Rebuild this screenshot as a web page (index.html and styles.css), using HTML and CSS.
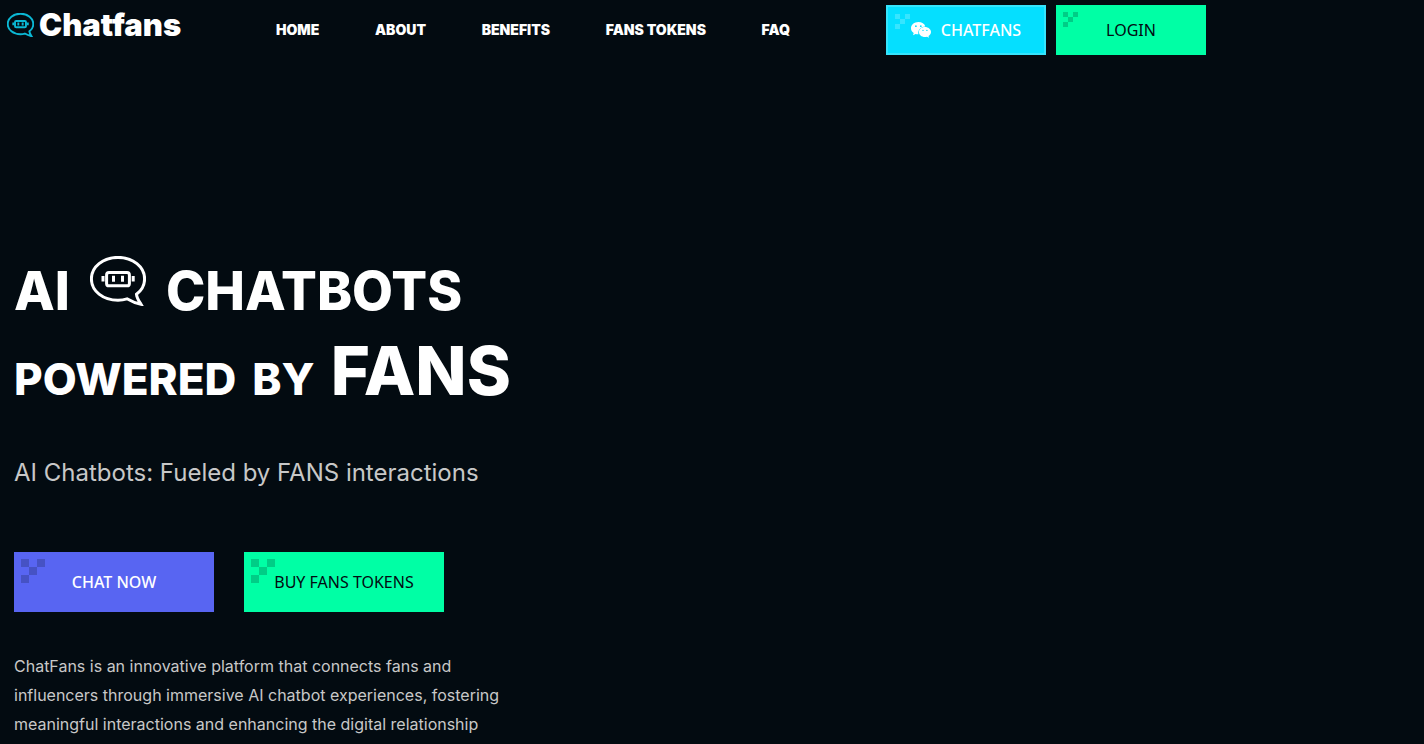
FILE: index.html
```html
<!DOCTYPE html>
<html lang="en">
<head>
  <meta charset="UTF-8">
  <meta name="viewport" content="width=device-width, initial-scale=1.0">
  <title>Chatfans</title>
  <link rel="stylesheet" href="styles.css">
</head>
<body>
  <svg class="sprite" aria-hidden="true">
    <symbol id="bot" viewBox="0 0 56 50">
      <g fill="none" stroke="currentColor">
        <path d="M37 42.800C34 43.800 31 44.200 28 44.200C13 44.200 1.400 35 1.400 22.900S13 1.400 28 1.400S54.600 11 54.600 22.900C54.600 29 51.500 34.500 46.500 38.300C46.800 42 49 45 51 48.300C46.500 47.400 41.500 45.500 37 42.800Z"/>
        <rect x="16.600" y="16.600" width="22.800" height="13.200" rx="2.400"/>
        <path d="M23.500 19.800v6M32.500 19.800v6M13 20v5.600M43.200 20v5.600"/>
      </g>
    </symbol>
    <symbol id="pixels" viewBox="0 0 3 3">
      <path fill="currentColor" d="M0 0h1v1h-1zM2 0h1v1h-1zM1 1h1v1h-1zM0 2h1v1h-1z"/>
    </symbol>
  </svg>

  <header class="header">
    <a class="logo" href="#">
      <svg class="logo-icon" aria-hidden="true"><use href="#bot"/></svg>
      <span>Chatfans</span>
    </a>
    <nav class="nav">
      <a href="#home">HOME</a>
      <a href="#about">ABOUT</a>
      <a href="#benefits">BENEFITS</a>
      <a href="#tokens">FANS TOKENS</a>
      <a href="#faq">FAQ</a>
    </nav>
    <div class="header-btns">
      <button class="btn btn-cyan">
        <svg class="pixels" aria-hidden="true"><use href="#pixels"/></svg>
        <svg class="wechat" viewBox="0 0 20 16" aria-hidden="true">
          <path fill="#fff" d="M7.4 0C3.3 0 0 2.8 0 6.2c0 1.9 1 3.6 2.7 4.8L2 13.2l2.6-1.3c.9.3 1.8.4 2.8.4C6.5 8 9.7 4.6 14.3 4.4C13.6 1.8 10.8 0 7.4 0z"/>
          <path fill="#fff" d="M20 10c0-2.8-2.8-5-6.1-5S7.9 7.200 7.900 10s2.600 5 6 5c.7 0 1.400-.1 2.100-.3l2 1.100-.5-1.800C19 13 20 11.600 20 10z"/>
          <g fill="#05dfff">
            <circle cx="4.900" cy="4.200" r=".9"/><circle cx="9.800" cy="4.200" r=".9"/>
            <circle cx="12" cy="8.400" r=".7"/><circle cx="15.900" cy="8.400" r=".7"/>
          </g>
        </svg>
        CHATFANS
      </button>
      <button class="btn btn-green">
        <svg class="pixels" aria-hidden="true"><use href="#pixels"/></svg>
        LOGIN
      </button>
    </div>
  </header>

  <main class="hero" id="home">
    <h1>
      <span class="line">
        <span>AI</span>
        <svg class="title-icon" aria-hidden="true"><use href="#bot"/></svg>
        <span>CHATBOTS</span>
      </span>
      <span class="line small">
        <span>POWERED</span>
        <span>BY</span>
        <span class="big">FANS</span>
      </span>
    </h1>
    <p class="tagline">AI Chatbots: Fueled by FANS interactions</p>
    <div class="hero-btns">
      <button class="btn btn-blue">
        <svg class="pixels" aria-hidden="true"><use href="#pixels"/></svg>
        CHAT NOW
      </button>
      <button class="btn btn-green">
        <svg class="pixels" aria-hidden="true"><use href="#pixels"/></svg>
        BUY FANS TOKENS
      </button>
    </div>
    <p class="intro">ChatFans is an innovative platform that connects fans and influencers through immersive AI chatbot experiences, fostering meaningful interactions and enhancing the digital relationship</p>
  </main>
</body>
</html>
```

FILE: styles.css
```css
* {
  margin: 0;
  padding: 0;
  box-sizing: border-box;
}

body {
  font-family: Inter, sans-serif;
  background: #030b11;
  color: #fff;
}

.sprite {
  position: absolute;
  width: 0;
  height: 0;
}

.header {
  display: grid;
  grid-template-columns: 269px 514px auto;
  align-items: center;
  max-width: 1206px;
  padding: 5px 0 0 7px;
}

.logo {
  display: flex;
  align-items: center;
  align-self: start;
  gap: 5px;
  color: #fff;
  text-decoration: none;
  font-size: 31px;
  line-height: 40px;
  font-weight: 900;
}

.logo-icon {
  width: 27px;
  height: 24px;
  color: #0bb8d4;
  stroke-width: 4;
}

.nav {
  display: flex;
  justify-content: space-between;
}

.nav a {
  color: #fff;
  text-decoration: none;
  font-size: 14px;
  line-height: 20px;
  font-weight: 900;
}

.header-btns {
  display: flex;
  justify-content: flex-end;
  gap: 10px;
}

.btn {
  position: relative;
  display: flex;
  justify-content: center;
  align-items: center;
  gap: 10px;
  width: 150px;
  height: 50px;
  border: none;
  font-family: "Noto Sans", sans-serif;
  font-size: 16px;
  cursor: pointer;
}

.btn-cyan {
  width: 160px;
  background: #05dfff;
  border: 2px solid #35e4fc;
  color: #fff;
  font-weight: 500;
}

.btn-green {
  background: #00ffa5;
  color: #030b11;
}

.btn-blue {
  background: #5865f2;
  color: #fff;
  font-weight: 500;
}

.pixels {
  position: absolute;
  top: 7px;
  left: 7px;
  width: 15px;
  height: 15px;
  color: #030b11;
  opacity: 0.2;
}

.btn-cyan .pixels {
  color: #fff;
}

.wechat {
  width: 20px;
  height: 16px;
}

.hero {
  max-width: 530px;
  padding: 192px 14px 0;
}

h1 {
  font-size: 53px;
  font-weight: 800;
}

.line {
  display: flex;
  align-items: baseline;
  gap: 20px;
  line-height: 88px;
  white-space: nowrap;
}

.title-icon {
  align-self: flex-start;
  width: 56px;
  height: 50px;
  margin-top: 9px;
  stroke-width: 3;
}

.small {
  gap: 16px;
  font-size: 44px;
  line-height: 72px;
}

.big {
  font-size: 67px;
}

.tagline {
  margin-top: 40px;
  font-size: 24px;
  line-height: 36px;
  color: #c8c8c8;
}

.hero-btns {
  display: flex;
  gap: 30px;
  margin-top: 61px;
}

.hero-btns .btn {
  width: 200px;
  height: 60px;
}

.hero-btns .pixels {
  width: 24px;
  height: 24px;
}

.intro {
  margin-top: 40px;
  font-size: 16px;
  line-height: 29px;
  color: #c8c8c8;
}
```
